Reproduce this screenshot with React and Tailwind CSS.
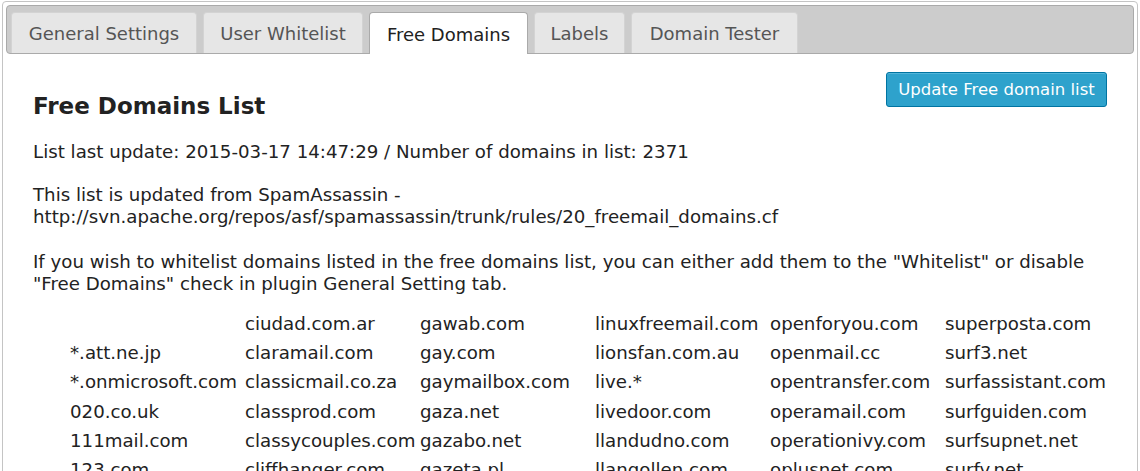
import React from 'react'

const TABS = [
  { label: 'General Settings', w: 'w-[186px]' },
  { label: 'User Whitelist', w: 'w-[160px]' },
  { label: 'Free Domains', w: 'w-[159px]', active: true },
  { label: 'Labels', w: 'w-[91px]' },
  { label: 'Domain Tester', w: 'w-[167px]' },
]

const ROWS = [
  ['', 'ciudad.com.ar', 'gawab.com', 'linuxfreemail.com', 'openforyou.com', 'superposta.com'],
  ['*.att.ne.jp', 'claramail.com', 'gay.com', 'lionsfan.com.au', 'openmail.cc', 'surf3.net'],
  ['*.onmicrosoft.com', 'classicmail.co.za', 'gaymailbox.com', 'live.*', 'opentransfer.com', 'surfassistant.com'],
  ['020.co.uk', 'classprod.com', 'gaza.net', 'livedoor.com', 'operamail.com', 'surfguiden.com'],
  ['111mail.com', 'classycouples.com', 'gazabo.net', 'llandudno.com', 'operationivy.com', 'surfsupnet.net'],
  ['123.com', 'cliffhanger.com', 'gazeta.pl', 'llangollen.com', 'oplusnet.com', 'surfy.net'],
]

export default function App() {
  return (
    <div className="h-[471px] overflow-hidden bg-white pl-[2px] pr-[2px] pt-[1px] font-['DejaVu_Sans',sans-serif]">
      <div className="h-[520px] rounded-[4px] border border-[#c4c4c4] p-[3px]">
        {/* tab header */}
        <div className="flex h-[49px] items-end gap-[6px] rounded-[4px] border border-[#aaaaaa] bg-[#cccccc] pl-[4px]">
          {TABS.map((t) => (
            <div
              key={t.label}
              className={
                t.active
                  ? `${t.w} -mb-px flex h-[42px] items-center justify-center rounded-t-[4px] border border-b-0 border-[#aaaaaa] bg-white pt-[1px] text-[18px] text-[#212121]`
                  : `${t.w} flex h-[41px] items-center justify-center rounded-t-[4px] border border-b-0 border-[#d3d3d3] bg-[#e6e6e6] pt-[1px] text-[18px] text-[#555555]`
              }
            >
              {t.label}
            </div>
          ))}
        </div>

        {/* panel */}
        <div className="px-[27px] pt-[18px] text-[18.2px] leading-[22px] text-[#222222]">
          <div className="flex items-start justify-between">
            <h2 className="mt-[20px] text-[23px] font-bold leading-[28px] text-[#222222]">Free Domains List</h2>
            <button className="h-[35px] w-[221px] rounded-[3px] border border-[#0074a2] bg-[#2ea2cc] text-[16.5px] text-white shadow-[inset_0_1px_0_rgba(120,200,230,0.5)]">
              Update Free domain list
            </button>
          </div>

          <p className="mt-[21px]">List last update: 2015-03-17 14:47:29 / Number of domains in list: 2371</p>
          <p className="mt-[21px]">
            This list is updated from SpamAssassin -
            <br />
            http://svn.apache.org/repos/asf/spamassassin/trunk/rules/20_freemail_domains.cf
          </p>
          <p className="mt-[23px]">
            If you wish to whitelist domains listed in the free domains list, you can either add them to the "Whitelist" or disable
            <br />
            "Free Domains" check in plugin General Setting tab.
          </p>

          <div className="mt-[14px] ml-[37px] grid grid-cols-[175px_175px_175px_175px_175px_175px] auto-rows-[29.3px]">
            {ROWS.flat().map((d, i) => (
              <div key={i} className="flex items-center whitespace-nowrap">
                {d}
              </div>
            ))}
          </div>
        </div>
      </div>
    </div>
  )
}
